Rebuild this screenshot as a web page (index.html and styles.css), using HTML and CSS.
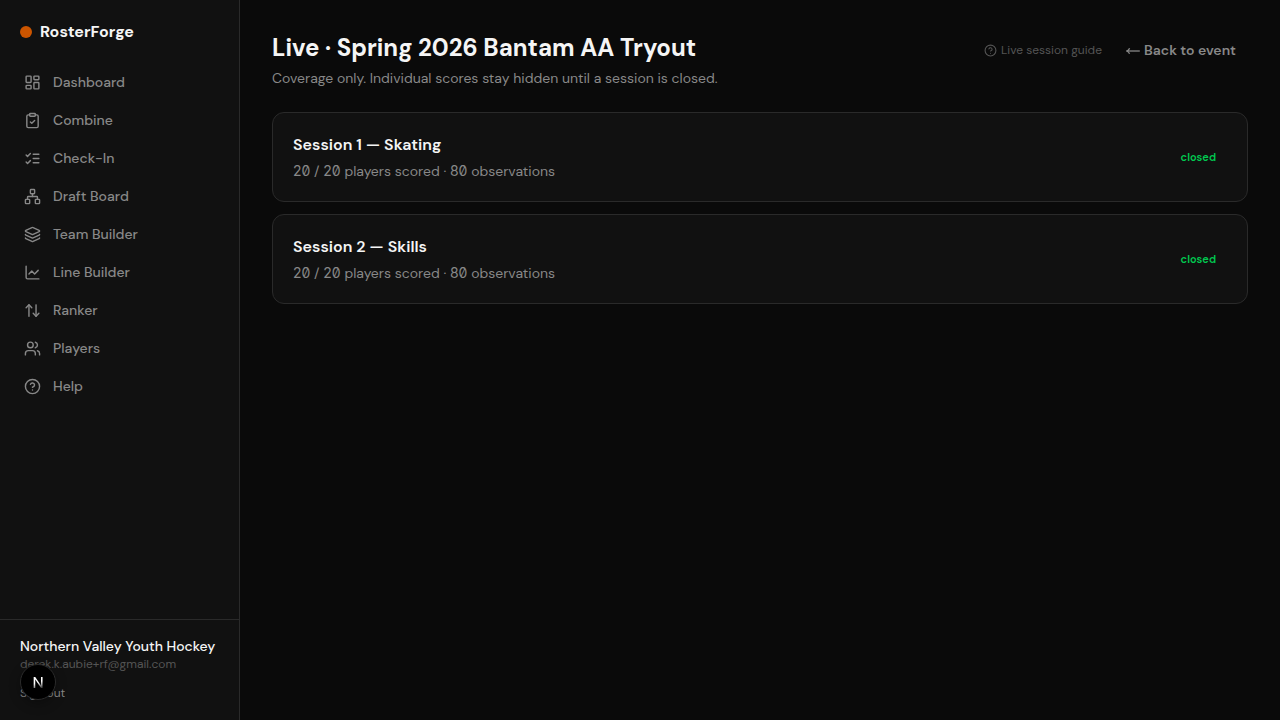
FILE: index.html
```
<!DOCTYPE html>
<html lang="en">
<head>
<meta charset="UTF-8">
<meta name="viewport" content="width=device-width, initial-scale=1.0">
<title>RosterForge</title>
<link rel="stylesheet" href="styles.css">
</head>
<body>
<div class="app">
<aside class="sidebar">
<div class="brand"><span class="brand-dot"></span>RosterForge</div>
<nav class="nav">
<a href="#"><svg class="icon" viewBox="0 0 24 24"><rect x="3" y="3" width="7" height="9" rx="1"/><rect x="14" y="3" width="7" height="5" rx="1"/><rect x="14" y="12" width="7" height="9" rx="1"/><rect x="3" y="16" width="7" height="5" rx="1"/></svg>Dashboard</a>
<a href="#"><svg class="icon" viewBox="0 0 24 24"><rect x="8" y="2" width="8" height="4" rx="1"/><path d="M16 4h2a2 2 0 0 1 2 2v14a2 2 0 0 1-2 2H6a2 2 0 0 1-2-2V6a2 2 0 0 1 2-2h2"/><path d="m9 14 2 2 4-4"/></svg>Combine</a>
<a href="#"><svg class="icon" viewBox="0 0 24 24"><path d="m3 17 2 2 4-4"/><path d="m3 7 2 2 4-4"/><path d="M13 6h8"/><path d="M13 12h8"/><path d="M13 18h8"/></svg>Check-In</a>
<a href="#"><svg class="icon" viewBox="0 0 24 24"><rect x="16" y="16" width="6" height="6" rx="1"/><rect x="2" y="16" width="6" height="6" rx="1"/><rect x="9" y="2" width="6" height="6" rx="1"/><path d="M5 16v-3a1 1 0 0 1 1-1h12a1 1 0 0 1 1 1v3"/><path d="M12 12V8"/></svg>Draft Board</a>
<a href="#"><svg class="icon" viewBox="0 0 24 24"><path d="M12.83 2.18a2 2 0 0 0-1.66 0L2.6 6.08a1 1 0 0 0 0 1.83l8.58 3.91a2 2 0 0 0 1.66 0l8.58-3.9a1 1 0 0 0 0-1.83z"/><path d="M2 12a1 1 0 0 0 .58.91l8.6 3.91a2 2 0 0 0 1.65 0l8.58-3.9A1 1 0 0 0 22 12"/><path d="M2 17a1 1 0 0 0 .58.91l8.6 3.91a2 2 0 0 0 1.65 0l8.58-3.9A1 1 0 0 0 22 17"/></svg>Team Builder</a>
<a href="#"><svg class="icon" viewBox="0 0 24 24"><path d="M3 3v16a2 2 0 0 0 2 2h16"/><path d="m7 14 4-4 4 4 5-5"/></svg>Line Builder</a>
<a href="#"><svg class="icon" viewBox="0 0 24 24"><path d="m3 8 4-4 4 4"/><path d="M7 4v16"/><path d="m21 16-4 4-4-4"/><path d="M17 20V4"/></svg>Ranker</a>
<a href="#"><svg class="icon" viewBox="0 0 24 24"><path d="M16 21v-2a4 4 0 0 0-4-4H6a4 4 0 0 0-4 4v2"/><circle cx="9" cy="7" r="4"/><path d="M22 21v-2a4 4 0 0 0-3-3.87"/><path d="M16 3.13a4 4 0 0 1 0 7.75"/></svg>Players</a>
<a href="#"><svg class="icon" viewBox="0 0 24 24"><circle cx="12" cy="12" r="10"/><path d="M9.09 9a3 3 0 0 1 5.83 1c0 2-3 3-3 3"/><path d="M12 17h.01"/></svg>Help</a>
</nav>
<div class="account">
<div class="account-name">Northern Valley Youth Hockey</div>
<div class="account-email">derek.k.aubie+rf@gmail.com</div>
<button class="sign-out" type="button">Sign out</button>
</div>
</aside>
<main class="main">
<header class="page-header">
<div class="page-heading">
<h1>Live · Spring 2026 Bantam AA Tryout</h1>
<p>Coverage only. Individual scores stay hidden until a session is closed.</p>
</div>
<div class="page-actions">
<a class="guide-link" href="#"><svg class="icon icon-small" viewBox="0 0 24 24"><circle cx="12" cy="12" r="10"/><path d="M9.09 9a3 3 0 0 1 5.83 1c0 2-3 3-3 3"/><path d="M12 17h.01"/></svg>Live session guide</a>
<a class="back-link" href="#"><svg class="arrow" viewBox="0 0 14 14"><path d="M.8 8h13"/><path d="M3.6 5.2C3 6.6 2 7.6.8 8c1.200.4 2.200 1.400 2.800 2.800"/></svg>Back to event</a>
</div>
</header>
<section class="sessions">
<article class="card">
<div class="card-body">
<h2>Session 1 — Skating</h2>
<p><span class="num">20</span> / <span class="num">20</span> players scored · <span class="num">80</span> observations</p>
</div>
<span class="status">closed</span>
</article>
<article class="card">
<div class="card-body">
<h2>Session 2 — Skills</h2>
<p><span class="num">20</span> / <span class="num">20</span> players scored · <span class="num">80</span> observations</p>
</div>
<span class="status">closed</span>
</article>
</section>
</main>
</div>
<button class="dev-badge" type="button" aria-label="Open dev tools"><span>N</span></button>
</body>
</html>
```
FILE: styles.css
```
* {
  box-sizing: border-box;
}
body {
  margin: 0;
  background-color: #0a0a0a;
  color: #f5f5f5;
  font-family: "DM Sans", Inter, sans-serif;
  font-size: 14px;
  line-height: 20px;
}
h1, h2, p {
  margin: 0;
}
a {
  color: inherit;
  text-decoration: none;
}
button {
  font-family: inherit;
  cursor: pointer;
}
.app {
  display: flex;
  min-height: 100vh;
}

/* Sidebar */
.sidebar {
  display: flex;
  flex-direction: column;
  flex: 0 0 240px;
  background-color: #111;
  border-right: 1px solid #2a2a2a;
}
.brand {
  display: flex;
  align-items: center;
  gap: 8px;
  padding: 20px;
  font-size: 16px;
  font-weight: 700;
  line-height: 24px;
}
.brand-dot {
  width: 12px;
  height: 12px;
  border-radius: 50%;
  background-color: #cc5500;
}
.nav {
  display: flex;
  flex-direction: column;
  flex: 1;
  gap: 2px;
  padding: 0 12px;
}
.nav a {
  display: flex;
  align-items: center;
  gap: 12px;
  padding: 8px 12px;
  color: #888;
  font-weight: 500;
}
.icon {
  width: 17px;
  height: 17px;
  flex-shrink: 0;
  fill: none;
  stroke: currentColor;
  stroke-width: 2;
  stroke-linecap: round;
  stroke-linejoin: round;
}
.icon-small {
  width: 13px;
  height: 13px;
}
.account {
  padding: 16px 20px 18px;
  border-top: 1px solid #2a2a2a;
}
.account-name {
  font-weight: 500;
  white-space: nowrap;
}
.account-email {
  color: #555;
  font-size: 12px;
  line-height: 16px;
}
.sign-out {
  display: block;
  margin-top: 12px;
  padding: 0;
  border: 0;
  background: none;
  color: #888;
  font-size: 12px;
  line-height: 18px;
}

/* Page */
.main {
  flex: 1;
  min-width: 0;
  padding: 32px;
}
.page-header {
  display: flex;
  align-items: flex-start;
  justify-content: space-between;
  margin-bottom: 24px;
}
.page-heading h1 {
  font-size: 24px;
  font-weight: 700;
  line-height: 32px;
}
.page-heading p {
  margin-top: 4px;
  color: #888;
}
.page-actions {
  display: flex;
  align-items: center;
  gap: 12px;
}
.guide-link {
  display: flex;
  align-items: center;
  gap: 4px;
  color: #555;
  font-size: 12px;
}
.back-link {
  display: flex;
  align-items: center;
  gap: 4px;
  padding: 8px 12px;
  color: #888;
  font-weight: 600;
}
.arrow {
  width: 14px;
  height: 14px;
  fill: none;
  stroke: currentColor;
  stroke-width: 1.3;
}
.sessions {
  display: flex;
  flex-direction: column;
  gap: 12px;
}
.card {
  display: flex;
  align-items: center;
  justify-content: space-between;
  padding: 20px;
  background-color: #111;
  border: 1px solid #2a2a2a;
  border-radius: 12px;
}
.card h2 {
  font-size: 16px;
  font-weight: 600;
  line-height: 24px;
}
.card p {
  margin-top: 4px;
  color: #888;
}
.num {
  font-family: Inter, sans-serif;
  font-variant-numeric: slashed-zero;
}
.status {
  padding: 0 10px;
  border: 1px solid transparent;
  color: #00c950;
  font-size: 11px;
  font-weight: 600;
}

/* Floating badge */
.dev-badge {
  position: fixed;
  left: 20px;
  bottom: 20px;
  display: flex;
  align-items: center;
  justify-content: center;
  width: 36px;
  height: 36px;
  padding: 0;
  border: 1px solid #2a2a2a;
  border-radius: 50%;
  background-color: #000;
  box-shadow: 0 4px 12px rgba(0, 0, 0, 0.3);
}
.dev-badge span {
  background-image: linear-gradient(160deg, #fff 50%, #444 75%);
  background-clip: text;
  color: transparent;
  font-size: 16px;
  font-weight: 500;
}
```
